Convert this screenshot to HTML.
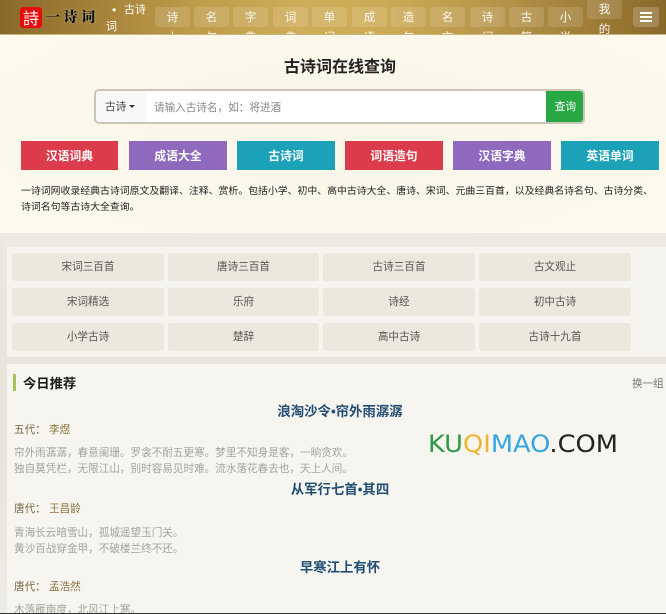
<!DOCTYPE html>
<html lang="zh-CN">
<head>
<meta charset="utf-8">
<title>古诗词在线查询</title>
<style>
html,body{margin:0;padding:0;}
body{width:666px;height:614px;position:relative;overflow:hidden;background:#edebe4;font-family:"Liberation Sans","Noto Sans CJK SC",sans-serif;}
.a{position:absolute;white-space:nowrap;}
.hd{position:absolute;left:0;top:0;width:666px;height:34px;overflow:hidden;background:linear-gradient(90deg,#8a682a 0%,#a07d36 12%,#bd9a49 28%,#cfac58 45%,#cdaa55 58%,#b8954a 74%,#a07e38 88%,#8a682a 100%);border-bottom:1px solid #c9b97f;}
.nb{position:absolute;top:7px;width:35px;height:20px;background:rgba(255,255,255,.14);box-sizing:border-box;border-radius:3px;color:#fff;font-size:11.5px;line-height:20px;text-align:center;opacity:.95;}
.nb span{display:block;width:12px;margin:0 auto;white-space:normal;padding-top:1px;}
.cb{position:absolute;top:141px;height:29px;color:#fff;font-weight:bold;font-size:11.8px;line-height:30px;text-align:center;}
.gb{position:absolute;height:28px;background:#ede8dd;border-radius:3px;color:#555;font-size:10.6px;line-height:29px;text-align:center;}
.tt{position:absolute;left:14px;width:652px;text-align:center;font-weight:bold;font-size:13.4px;line-height:18px;color:#234e74;white-space:nowrap;}
.dy{position:absolute;left:14px;font-size:10.6px;line-height:14px;color:#7a6a45;white-space:nowrap;}
.dy b{font-weight:normal;color:#8f7440;position:absolute;left:35px;top:0;}
.pm{position:absolute;left:14px;font-size:10.6px;line-height:16px;color:#a3a3a0;white-space:nowrap;}
</style>
</head>
<body>
<div class="a" style="left:0;top:34px;width:666px;height:199px;background:radial-gradient(ellipse at 50% 45%,#f9f5e8 0%,#fbf7ea 50%,#fefaee 100%);"></div>
<div class="a" style="left:7px;top:247px;width:659px;height:110px;background:#f5f4ef;"></div>
<div class="a" style="left:0;top:235px;width:7px;height:378px;background:linear-gradient(180deg,#ebe9e2,#e6e3da 50%,#eeece6);"></div>
<div class="a" style="left:7px;top:357px;width:659px;height:7px;background:#e9e6dd;"></div>
<div class="a" style="left:7px;top:364px;width:659px;height:249px;background:#f6f5f0;"></div>
<div class="a" style="left:0;top:613px;width:666px;height:1px;background:#333;"></div>

<div class="hd">
  <div class="a" style="left:20px;top:7px;width:22px;height:21px;background:#e60d0d;border-radius:3px;color:#fff;font-family:'Noto Sans CJK SC',sans-serif;font-size:16px;line-height:21px;text-align:center;">詩</div>
  <div class="a" style="left:46px;top:7px;width:54px;height:22px;color:#0a0a0a;font-family:'Noto Serif CJK SC',serif;font-weight:900;font-size:14px;line-height:21px;letter-spacing:3.6px;text-shadow:0 0 2px rgba(255,255,255,.5);">一诗词</div>
  <div class="a" style="left:112px;top:1px;width:8px;color:#fff;font-size:12px;line-height:18px;">•</div>
  <div class="a" style="left:124px;top:1px;color:#fff;font-size:11px;line-height:18px;">古诗</div>
  <div class="a" style="left:106px;top:19px;color:#fff;font-size:11px;line-height:16px;">词</div>
  <div class="nb" style="left:155px"><span>诗人</span></div>
  <div class="nb" style="left:194px"><span>名句</span></div>
  <div class="nb" style="left:233px"><span>字典</span></div>
  <div class="nb" style="left:273px"><span>词典</span></div>
  <div class="nb" style="left:312px"><span>单词</span></div>
  <div class="nb" style="left:352px"><span>成语</span></div>
  <div class="nb" style="left:391px"><span>造句</span></div>
  <div class="nb" style="left:430px"><span>名言</span></div>
  <div class="nb" style="left:470px"><span>诗词</span></div>
  <div class="nb" style="left:509px"><span>古籍</span></div>
  <div class="nb" style="left:548px"><span>小说</span></div>
  <div class="nb" style="left:587px;top:-1px;height:20px;"><span>我的</span></div>
  <div class="a" style="left:633px;top:7px;width:26px;height:20px;background:rgba(255,255,255,.2);border-radius:3px;">
    <div style="position:absolute;left:7px;top:5px;width:12px;height:1.5px;background:#fff;"></div>
    <div style="position:absolute;left:7px;top:9px;width:12px;height:1.5px;background:#fff;"></div>
    <div style="position:absolute;left:7px;top:13px;width:12px;height:1.5px;background:#fff;"></div>
  </div>
</div>

<div class="a" style="left:284px;top:56px;font-size:16px;font-weight:bold;line-height:23px;color:#222;">古诗词在线查询</div>

<div class="a" style="left:94px;top:89px;width:491px;height:35px;box-sizing:border-box;border:2px solid #c9c6b8;border-radius:5px;background:#fff;overflow:hidden;">
  <div class="a" style="left:0;top:0;width:50px;height:31px;background:#f8f8f6;color:#444;font-size:10.6px;line-height:32px;text-indent:9px;">古诗</div>
  <div class="a" style="left:33px;top:14px;width:0;height:0;border-left:3px solid transparent;border-right:3px solid transparent;border-top:3px solid #333;"></div>
  <div class="a" style="left:58px;top:0;color:#888;font-size:10.6px;line-height:35px;">请输入古诗名，如：将进酒</div>
  <div class="a" style="left:450px;top:0;width:39px;height:31px;background:#28a745;color:#fff;font-size:10.6px;line-height:33px;text-align:center;">查询</div>
</div>

<div class="cb" style="left:21px;width:97px;background:#dc3b4b;">汉语词典</div>
<div class="cb" style="left:129px;width:98px;background:#8e69bd;">成语大全</div>
<div class="cb" style="left:237px;width:98px;background:#1ba2b8;">古诗词</div>
<div class="cb" style="left:345px;width:98px;background:#dc3b4b;">词语造句</div>
<div class="cb" style="left:453px;width:98px;background:#8e69bd;">汉语字典</div>
<div class="cb" style="left:561px;width:98px;background:#1ba2b8;">英语单词</div>

<div class="a" style="left:21px;top:184px;font-size:9.9px;line-height:16px;color:#222;">一诗词网收录经典古诗词原文及翻译、注释、赏析。包括小学、初中、高中古诗大全、唐诗、宋词、元曲三百首，以及经典名诗名句、古诗分类、<br>诗词名句等古诗大全查询。</div>

<div class="gb" style="left:12px;top:253px;width:152px;">宋词三百首</div>
<div class="gb" style="left:168px;top:253px;width:151px;">唐诗三百首</div>
<div class="gb" style="left:323px;top:253px;width:152px;">古诗三百首</div>
<div class="gb" style="left:479px;top:253px;width:152px;">古文观止</div>
<div class="gb" style="left:12px;top:288px;width:152px;">宋词精选</div>
<div class="gb" style="left:168px;top:288px;width:151px;">乐府</div>
<div class="gb" style="left:323px;top:288px;width:152px;">诗经</div>
<div class="gb" style="left:479px;top:288px;width:152px;">初中古诗</div>
<div class="gb" style="left:12px;top:323px;width:152px;">小学古诗</div>
<div class="gb" style="left:168px;top:323px;width:151px;">楚辞</div>
<div class="gb" style="left:323px;top:323px;width:152px;">高中古诗</div>
<div class="gb" style="left:479px;top:323px;width:152px;">古诗十九首</div>

<div class="a" style="left:13px;top:374px;width:3px;height:17px;background:#a8bf5a;"></div>
<div class="a" style="left:23px;top:375px;font-size:13.3px;font-weight:bold;line-height:18px;color:#1a1a1a;">今日推荐</div>
<div class="a" style="left:632px;top:377px;font-size:10.6px;line-height:14px;color:#777;">换一组</div>

<svg class="a" style="left:425px;top:430px;" width="196" height="28" viewBox="0 0 196 28">
  <text x="3" y="22" textLength="190" lengthAdjust="spacingAndGlyphs" font-family="DejaVu Sans, sans-serif" font-size="24"><tspan fill="#2f9a46">KU</tspan><tspan fill="#f0b32f">QI</tspan><tspan fill="#35a6e0">MAO</tspan><tspan fill="#222">.COM</tspan></text>
</svg>

<div class="tt" style="top:403px;">浪淘沙令•帘外雨潺潺</div>
<div class="dy" style="top:423px;">五代：<b>李煜</b></div>
<div class="pm" style="top:445px;">帘外雨潺潺，春意阑珊。罗衾不耐五更寒。梦里不知身是客，一晌贪欢。<br>独自莫凭栏，无限江山，别时容易见时难。流水落花春去也，天上人间。</div>

<div class="tt" style="top:481px;">从军行七首•其四</div>
<div class="dy" style="top:502px;">唐代：<b>王昌龄</b></div>
<div class="pm" style="top:525px;">青海长云暗雪山，孤城遥望玉门关。<br>黄沙百战穿金甲，不破楼兰终不还。</div>

<div class="tt" style="top:559px;">早寒江上有怀</div>
<div class="dy" style="top:580px;">唐代：<b>孟浩然</b></div>
<div class="pm" style="top:602px;height:11px;overflow:hidden;">木落雁南度，北风江上寒。</div>
</body>
</html>
